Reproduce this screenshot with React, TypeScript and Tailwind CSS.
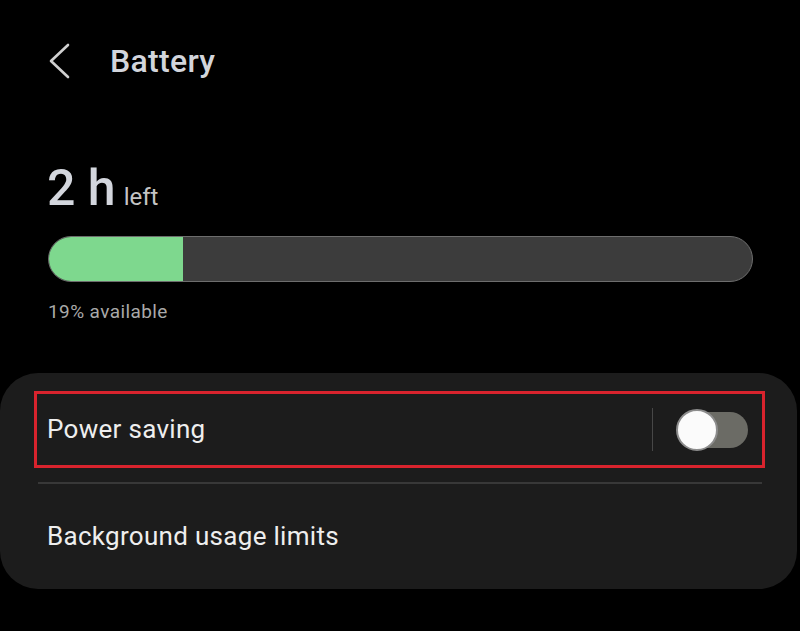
const Chevron = () => (
  <svg width="24" height="36" viewBox="0 0 24 36" fill="none">
    <polyline
      points="20,2 3,18 20,34"
      stroke="#d0d0d0"
      strokeWidth="2.6"
      strokeLinecap="round"
      strokeLinejoin="round"
    />
  </svg>
);

const Toggle = () => (
  <div className="relative w-[72px] h-[42px] flex items-center">
    <div className="absolute right-0 w-[70px] h-[36px] rounded-full bg-[#6b6b65]" />
    <div className="absolute left-0 w-[42px] h-[42px] rounded-full bg-[#fbfbfb] border-2 border-[#8c8c8c]" />
  </div>
);

export default function App() {
  const percent = 19;

  return (
    <div className="w-[800px] h-[631px] bg-black overflow-hidden font-['Roboto',sans-serif]">
      <div className="mt-[30px] h-[62px] flex items-center pl-[48px]">
        <Chevron />
        <span className="ml-[38px] text-[32px] font-medium leading-none tracking-[0.3px] text-[#d2d5dc]">
          Battery
        </span>
      </div>

      <div className="px-[48px]">
        <div className="mt-[71px] h-[50px] flex items-baseline">
          <span className="-ml-px text-[50px] font-medium leading-none text-[#d3d6dd]">2 h</span>
          <span className="ml-[8px] text-[24px] leading-none text-[#c4c4c4]">left</span>
        </div>

        <div className="mt-[23px] w-[705px] h-[46px] rounded-full bg-[#3c3c3c] border border-[#6d6d6d] overflow-hidden">
          <div className="h-full bg-[#7ed88e]" style={{ width: `${percent}%` }} />
        </div>

        <div className="mt-[20px] text-[19px] leading-none tracking-[0.4px] text-[#a9a9a9]">
          {percent}% available
        </div>
      </div>

      <div className="mt-[52px] w-[797px] rounded-[38px] bg-[#1c1c1c] pt-[18px]">
        <div className="ml-[34px] w-[731px] h-[77px] border-[3px] border-[#d8232d] flex items-center pl-[10px] pr-[14px]">
          <span className="flex-1 text-[26px] tracking-[0.3px] text-[#eeeeee]">Power saving</span>
          <div className="w-px h-[43px] bg-[#474747] mr-[23px]" />
          <Toggle />
        </div>
        <div className="ml-[38px] mt-[14px] w-[724px] h-[2px] bg-[#383838]" />
        <div className="h-[105px] flex items-center pl-[47px]">
          <span className="text-[26px] tracking-[0.3px] text-[#eeeeee]">Background usage limits</span>
        </div>
      </div>
    </div>
  );
}
